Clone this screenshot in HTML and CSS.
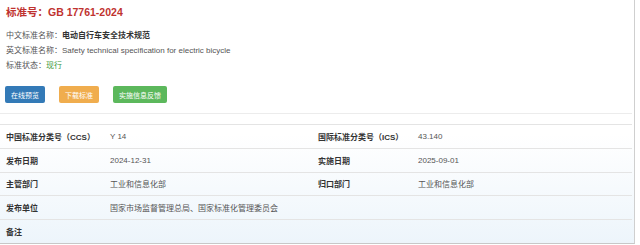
FILE: index.html
```html
<!DOCTYPE html>
<html lang="zh-CN">

<head>
    <meta charset="UTF-8">
    <meta name="viewport" content="width=device-width, initial-scale=1.0">
    <title>GB 17761-2024</title>
    <link rel="stylesheet" href="styles.css">
</head>

<body>
    <div class="panel">
        <!-- 标题与基本信息 -->
        <div class="head">
            <h1 class="std-title">标准号：GB 17761-2024</h1>
            <div class="info">
                <p><span class="info-label">中文标准名称：</span><strong>电动自行车安全技术规范</strong></p>
                <p><span class="info-label">英文标准名称：</span>Safety technical specification for electric bicycle</p>
                <p><span class="info-label">标准状态：</span><span class="status">现行</span></p>
            </div>
            <div class="actions">
                <button class="btn btn-blue">在线预览</button>
                <button class="btn btn-orange">下载标准</button>
                <button class="btn btn-green">实施信息反馈</button>
            </div>
        </div>

        <hr class="divider">

        <!-- 详情表格 -->
        <div class="detail">
            <div class="row">
                <div class="cell label">中国标准分类号（CCS）</div>
                <div class="cell value">Y 14</div>
                <div class="cell label">国际标准分类号（ICS）</div>
                <div class="cell value">43.140</div>
            </div>
            <div class="row">
                <div class="cell label">发布日期</div>
                <div class="cell value">2024-12-31</div>
                <div class="cell label">实施日期</div>
                <div class="cell value">2025-09-01</div>
            </div>
            <div class="row">
                <div class="cell label">主管部门</div>
                <div class="cell value">工业和信息化部</div>
                <div class="cell label">归口部门</div>
                <div class="cell value">工业和信息化部</div>
            </div>
            <div class="row">
                <div class="cell label">发布单位</div>
                <div class="cell value wide">国家市场监督管理总局、国家标准化管理委员会</div>
            </div>
            <div class="row">
                <div class="cell label">备注</div>
                <div class="cell value wide"></div>
            </div>
        </div>
    </div>
</body>

</html>
```

FILE: styles.css
```css
/* 重置默认样式 */
* {
    margin: 0;
    padding: 0;
    box-sizing: border-box;
}

body {
    background: #fff;
    font-family: "Liberation Sans", "Noto Sans CJK SC", sans-serif;
    font-size: 8px;
    color: #555;
}

.panel {
    width: 635px;
    height: 244px;
    padding-top: 4px;
    border-right: 1px solid #cfcfcf;
    border-bottom: 1px solid #c8c8c8;
    background: linear-gradient(to bottom, #fff 0%, #fff 55%, #edf5fb 100%);
    overflow: hidden;
}

.head {
    padding-left: 6px;
}

.std-title {
    font-size: 10.5px;
    line-height: 16px;
    font-weight: bold;
    color: #bf3330;
}

.info {
    margin-top: 8px;
}

.info p {
    line-height: 15px;
}

.info strong {
    color: #333;
}

.status {
    color: #3d9a3d;
}

/* 按钮 */
.actions {
    margin-top: 13px;
    margin-left: -1px;
    display: flex;
    gap: 14px;
}

.btn {
    height: 17px;
    padding: 0 6px;
    border: none;
    border-radius: 2px;
    color: #fff;
    font-family: inherit;
    font-size: 7px;
    cursor: pointer;
}

.btn-blue {
    background: #337ab7;
}

.btn-orange {
    background: #f0ad4e;
}

.btn-green {
    background: #5cb85c;
}

.divider {
    margin: 10px 2px 10px 0;
    border: none;
    border-top: 1px solid #ececec;
}

/* 详情表格 */
.detail {
    width: 632px;
    border-top: 1px solid #e4e4e4;
}

.row {
    display: grid;
    grid-template-columns: 104px 208px 100px 220px;
    height: 23.8px;
    border-bottom: 1px solid #e4e4e4;
}

.cell {
    display: flex;
    align-items: center;
    padding-left: 6px;
}

.label {
    font-weight: bold;
    color: #333;
}

.value {
    color: #555;
}

.wide {
    grid-column: 2 / 5;
}
```
